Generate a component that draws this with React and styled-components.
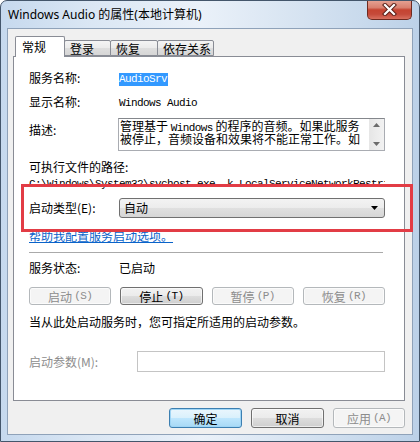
import React from 'react';
import styled, { createGlobalStyle } from 'styled-components';

const Global = createGlobalStyle`
  html, body { margin: 0; padding: 0; background: #ffffff; }
  body { width: 420px; height: 442px; overflow: hidden; }
  #root { width: 420px; height: 442px; }
`;

const UI = `"Noto Sans CJK SC", "Noto Sans", sans-serif`;

const Window = styled.div`
  position: relative;
  width: 420px;
  height: 442px;
  box-sizing: border-box;
  border: 1px solid #44566b;
  border-radius: 7px 7px 0 0;
  background: linear-gradient(90deg, #c6d9ee 0%, #dbe7f4 22%, #eaf1f9 48%, #d6e3f1 72%, #bcd1e8 100%);
  display: flex;
  flex-direction: column;
  overflow: hidden;
  font-family: ${UI};
`;

const TitleBar = styled.div`
  height: 27px;
  flex: none;
  display: flex;
  align-items: flex-start;
  padding-left: 7px;
`;

const Title = styled.div`
  font-family: "Noto Sans", "Noto Sans CJK SC", sans-serif;
  font-size: 12px;
  line-height: 27px;
  color: #000;
`;

const CloseBtn = styled.div`
  margin-left: auto;
  margin-right: 7px;
  margin-top: -1px;
  width: 45px;
  height: 20px;
  box-sizing: border-box;
  border: 1px solid #6e2a20;
  border-top: none;
  border-radius: 0 0 5px 5px;
  background: linear-gradient(180deg, #e7a596 0%, #d9806f 40%, #c54431 52%, #c54a3a 75%, #d8705f 100%);
  display: flex;
  align-items: center;
  justify-content: center;
`;

const Client = styled.div`
  flex: none;
  height: 407px;
  margin: 0 6px;
  box-sizing: border-box;
  border: 1px solid #8fa2b9;
  background: #f0f0f0;
  padding: 7px 7px 0 5px;
  display: flex;
  flex-direction: column;
`;

const TabStrip = styled.div`
  height: 20px;
  display: flex;
  align-items: flex-end;
  padding-left: 2px;
  position: relative;
  z-index: 1;
`;

const Tab = styled.div`
  width: ${p => p.$w}px;
  height: ${p => (p.$active ? 21 : 16)}px;
  margin-bottom: ${p => (p.$active ? -1 : 0)}px;
  margin-left: ${p => (p.$first ? 0 : -1)}px;
  box-sizing: border-box;
  border: 1px solid #898c95;
  border-bottom: ${p => (p.$active ? 'none' : '1px solid #898c95')};
  border-radius: 2px 2px 0 0;
  background: ${p => (p.$active ? '#ffffff' : 'linear-gradient(180deg, #f4f4f4 0%, #ebebeb 50%, #dedede 51%, #d6d6d6 100%)')};
  padding-left: ${p => (p.$active ? 6 : 5)}px;
  font-size: 12px;
  line-height: ${p => (p.$active ? 20 : 15)}px;
  color: #000;
  white-space: nowrap;
`;

const Panel = styled.div`
  width: 392px;
  height: 345px;
  box-sizing: border-box;
  border: 1px solid #898c95;
  background: #ffffff;
  padding: 0 19px 0 15px;
  display: flex;
  flex-direction: column;
`;

const Row = styled.div`
  display: flex;
  align-items: ${p => p.$align || 'center'};
  height: ${p => p.$h}px;
  margin-top: ${p => p.$mt}px;
  flex: none;
`;

const Label = styled.div`
  width: ${p => p.$w || 90}px;
  flex: none;
  font-size: 12px;
  line-height: 16px;
  color: ${p => (p.$muted ? '#8d8d8d' : '#000')};
  margin-top: ${p => p.$mt || 0}px;
  white-space: nowrap;
`;

const Text = styled.div`
  font-size: 12px;
  line-height: 16px;
  color: #000;
  white-space: nowrap;
`;

const Mono = styled.span`
  font-family: "Liberation Mono", "DejaVu Sans Mono", monospace;
  font-size: 11px;
  letter-spacing: -0.6px;
`;

const Selected = styled.span`
  background: #3399ff;
  color: #ffffff;
  display: inline-block;
  line-height: 13px;
  padding-right: 1px;
`;

const DescBox = styled.div`
  width: 268px;
  height: 33px;
  margin-left: -1px;
  box-sizing: border-box;
  border: 1px solid #a9acb2;
  border-top-color: #84878c;
  background: #fff;
  display: flex;
`;

const DescText = styled.div`
  flex: 1;
  padding-left: 1px;
  font-size: 12px;
  line-height: 13px;
  overflow: hidden;
`;

const DescLine = styled.div`
  white-space: nowrap;
  height: 13px;
`;

const ScrollBar = styled.div`
  width: 15px;
  flex: none;
  background: linear-gradient(90deg, #e6e6e6, #f2f2f2);
  display: flex;
  flex-direction: column;
  justify-content: space-between;
  align-items: center;
  padding: 4px 0;
  box-sizing: border-box;
`;

const PathLine = styled.div`
  width: 359px;
  overflow: hidden;
  white-space: nowrap;
  line-height: 14px;
  color: #000;
`;

const Combo = styled.div`
  width: 267px;
  height: 20px;
  box-sizing: border-box;
  border: 1px solid #707070;
  border-radius: 3px;
  background: linear-gradient(180deg, #f3f3f3 0%, #ececec 50%, #e0e0e0 51%, #d6d6d6 100%);
  display: flex;
  align-items: center;
  padding: 0 6px 0 4px;
  font-size: 12px;
  color: #000;
`;

const ComboText = styled.div`
  flex: 1;
  line-height: 18px;
`;

const Link = styled.div`
  font-size: 12px;
  line-height: 16px;
  color: #0a63c9;
  text-decoration: underline;
  white-space: nowrap;
`;

const Separator = styled.div`
  width: 354px;
  height: 1px;
  background: #aaaaaa;
  flex: none;
`;

const ButtonGrid = styled.div`
  display: grid;
  grid-template-columns: repeat(4, 1fr);
  column-gap: 9px;
  width: 356px;
  height: 18px;
  margin-top: ${p => p.$mt}px;
  flex: none;
`;

const Button = styled.div`
  width: ${p => (p.$w ? `${p.$w}px` : 'auto')};
  height: ${p => p.$h || 18}px;
  box-sizing: border-box;
  border: 1px solid ${p => (p.$disabled ? '#b4b8bb' : p.$primary ? '#3c7fb1' : '#707070')};
  border-radius: 3px;
  background: ${p =>
    p.$disabled
      ? '#f4f4f4'
      : p.$primary
      ? 'linear-gradient(180deg, #eaf6fd 0%, #d9f0fc 50%, #bee6fd 51%, #a7d9f5 100%)'
      : 'linear-gradient(180deg, #f2f2f2 0%, #ebebeb 50%, #dddddd 51%, #cfcfcf 100%)'};
  box-shadow: ${p => (p.$primary ? 'inset 0 0 0 1px #9fd5f5' : 'inset 0 0 0 1px rgba(255,255,255,0.6)')};
  display: flex;
  align-items: center;
  justify-content: center;
  font-size: 12px;
  color: ${p => (p.$disabled ? '#8c8c8c' : '#000')};
  white-space: nowrap;
`;

const Key = styled.span`
  font-family: "Liberation Mono", monospace;
  font-size: 11px;
  letter-spacing: -0.6px;
  margin-left: 2px;
`;

const Input = styled.div`
  width: 249px;
  height: 21px;
  box-sizing: border-box;
  border: 1px solid #c4c4c4;
  background: #ffffff;
`;

const Footer = styled.div`
  display: flex;
  justify-content: flex-end;
  gap: 9px;
  margin-top: 7px;
`;

const Highlight = styled.div`
  position: absolute;
  left: 20px;
  top: 183px;
  width: 392px;
  height: 48px;
  box-sizing: border-box;
  border: 3px solid #e23c45;
  pointer-events: none;
`;

const Up = () => (
  <svg width="7" height="4" viewBox="0 0 7 4"><path d="M0 4 L3.5 0 L7 4 Z" fill="#6b6b6b" /></svg>
);
const Down = ({ color = '#6b6b6b' }) => (
  <svg width="7" height="4" viewBox="0 0 7 4"><path d="M0 0 L7 0 L3.5 4 Z" fill={color} /></svg>
);

export default function App() {
  return (
    <>
      <Global />
      <Window>
        <TitleBar>
          <Title>Windows Audio 的属性(本地计算机)</Title>
          <CloseBtn>
            <svg width="15" height="13" viewBox="0 0 15 13">
              <path d="M3 2 L12 11 M12 2 L3 11" stroke="#5a2018" strokeWidth="4.2" strokeLinecap="square" />
              <path d="M3 2 L12 11 M12 2 L3 11" stroke="#ffffff" strokeWidth="2.2" strokeLinecap="square" />
            </svg>
          </CloseBtn>
        </TitleBar>
        <Client>
          <TabStrip>
            <Tab $active $first $w={50}>常规</Tab>
            <Tab $w={47}>登录</Tab>
            <Tab $w={48}>恢复</Tab>
            <Tab $w={57}>依存关系</Tab>
          </TabStrip>
          <Panel>
            <Row $h={16} $mt={13}>
              <Label>服务名称:</Label>
              <Text><Mono><Selected>AudioSrv</Selected></Mono></Text>
            </Row>
            <Row $h={16} $mt={8}>
              <Label>显示名称:</Label>
              <Text><Mono>Windows Audio</Mono></Text>
            </Row>
            <Row $h={33} $mt={8} $align="flex-start">
              <Label $mt={4}>描述:</Label>
              <DescBox>
                <DescText>
                  <DescLine>管理基于 <Mono>Windows</Mono> 的程序的音频。如果此服务</DescLine>
                  <DescLine>被停止，音频设备和效果将不能正常工作。如</DescLine>
                </DescText>
                <ScrollBar>
                  <Up />
                  <Down />
                </ScrollBar>
              </DescBox>
            </Row>
            <Row $h={16} $mt={8}>
              <Label $w={200}>可执行文件的路径:</Label>
            </Row>
            <Row $h={14} $mt={0}>
              <PathLine><Mono>C:\Windows\System32\svchost.exe -k LocalServiceNetworkRestricted</Mono></PathLine>
            </Row>
            <Row $h={20} $mt={9}>
              <Label>启动类型(E):</Label>
              <Combo>
                <ComboText>自动</ComboText>
                <Down color="#000" />
              </Combo>
            </Row>
            <Row $h={16} $mt={10}>
              <Link>帮助我配置服务启动选项。</Link>
            </Row>
            <Row $h={1} $mt={8}>
              <Separator />
            </Row>
            <Row $h={16} $mt={7}>
              <Label>服务状态:</Label>
              <Text>已启动</Text>
            </Row>
            <ButtonGrid $mt={11}>
              <Button $disabled>启动<Key>(S)</Key></Button>
              <Button>停止<Key>(T)</Key></Button>
              <Button $disabled>暂停<Key>(P)</Key></Button>
              <Button $disabled>恢复<Key>(R)</Key></Button>
            </ButtonGrid>
            <Row $h={16} $mt={9}>
              <Text>当从此处启动服务时，您可指定所适用的启动参数。</Text>
            </Row>
            <Row $h={21} $mt={21}>
              <Label $w={108} $muted>启动参数(M):</Label>
              <Input />
            </Row>
          </Panel>
          <Footer>
            <Button $primary $w={73} $h={20}>确定</Button>
            <Button $w={73} $h={20}>取消</Button>
            <Button $disabled $w={72} $h={20}>应用<Key>(A)</Key></Button>
          </Footer>
        </Client>
        <Highlight />
      </Window>
    </>
  );
}
